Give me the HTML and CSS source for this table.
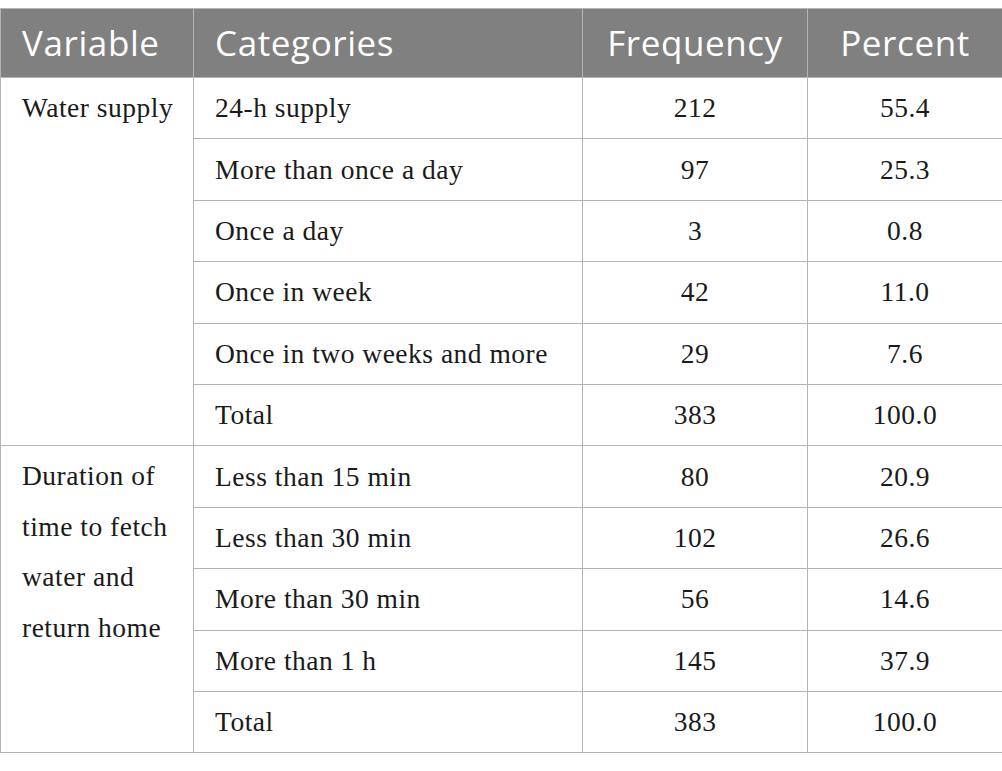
FILE: index.html
```html
<!DOCTYPE html>
<html>
<head>
<meta charset="utf-8">
<link rel="stylesheet" href="styles.css">
</head>
<body>
<table class="data">
  <colgroup>
    <col class="c1"><col class="c2"><col class="c3"><col class="c4">
  </colgroup>
  <thead>
    <tr>
      <th class="left">Variable</th>
      <th class="left">Categories</th>
      <th class="num">Frequency</th>
      <th class="num">Percent</th>
    </tr>
  </thead>
  <tbody>
    <tr>
      <td class="var" rowspan="6">Water supply</td>
      <td>24-h supply</td><td class="num">212</td><td class="num">55.4</td>
    </tr>
    <tr><td>More than once a day</td><td class="num">97</td><td class="num">25.3</td></tr>
    <tr><td>Once a day</td><td class="num">3</td><td class="num">0.8</td></tr>
    <tr><td>Once in week</td><td class="num">42</td><td class="num">11.0</td></tr>
    <tr><td>Once in two weeks and more</td><td class="num">29</td><td class="num">7.6</td></tr>
    <tr><td>Total</td><td class="num">383</td><td class="num">100.0</td></tr>
    <tr>
      <td class="var" rowspan="5">Duration of time to fetch water and return home</td>
      <td>Less than 15 min</td><td class="num">80</td><td class="num">20.9</td>
    </tr>
    <tr><td>Less than 30 min</td><td class="num">102</td><td class="num">26.6</td></tr>
    <tr><td>More than 30 min</td><td class="num">56</td><td class="num">14.6</td></tr>
    <tr><td>More than 1 h</td><td class="num">145</td><td class="num">37.9</td></tr>
    <tr><td>Total</td><td class="num">383</td><td class="num">100.0</td></tr>
  </tbody>
</table>
</body>
</html>
```
FILE: styles.css
```css
html, body {
  margin: 0;
  padding: 0;
  background: #ffffff;
}
body {
  padding-top: 8px;
}
.data {
  border-collapse: collapse;
  table-layout: fixed;
  width: 1002px;
}
.c1 { width: 193px; }
.c2 { width: 389px; }
.c3 { width: 225px; }
.c4 { width: 195px; }
.data th, .data td {
  border: 1px solid #b4b4b4;
}
.data th {
  background: #808080;
  color: #ffffff;
  font-family: "Open Sans", "Noto Sans", sans-serif;
  font-weight: 400;
  font-size: 35px;
  letter-spacing: 0.6px;
  height: 68px;
  padding: 0 21px;
  line-height: 40px;
  vertical-align: middle;
}
.data th.left { text-align: left; }
.data th.num { text-align: center; }
.data td {
  font-family: "Liberation Serif", "Times New Roman", serif;
  font-size: 27.5px;
  letter-spacing: 0.5px;
  color: #1a1a1a;
  height: 61.4px;
  padding: 0 21px;
  line-height: 50px;
  vertical-align: middle;
  text-align: left;
  box-sizing: border-box;
}
.data td.num { text-align: center; }
.data td.var {
  vertical-align: top;
  padding: 5px 4px 0 21px;
  line-height: 50.5px;
}
```
